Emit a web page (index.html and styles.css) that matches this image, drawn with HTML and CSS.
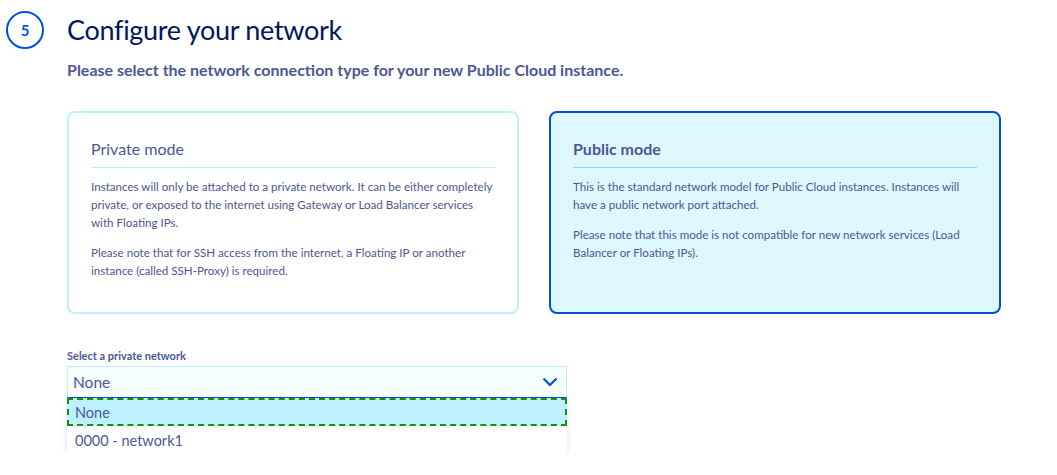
FILE: index.html
```html
<!DOCTYPE html>
<html>
<head>
<meta charset="utf-8">
<link rel="stylesheet" href="styles.css">
</head>
<body>
<div class="step">
  <div class="step-head">
    <div class="step-num">5</div>
    <h1 class="step-title">Configure your network</h1>
  </div>
  <div class="step-body">
    <p class="lead">Please select the network connection type for your new Public Cloud instance.</p>
    <div class="cards">
      <div class="card">
        <h2 class="card-title">Private mode</h2>
        <p class="card-text">Instances will only be attached to a private network. It can be either completely private, or exposed to the internet using Gateway or Load Balancer services with Floating IPs.</p>
        <p class="card-text">Please note that for SSH access from the internet, a Floating IP or another instance (called SSH-Proxy) is required.</p>
      </div>
      <div class="card card-active">
        <h2 class="card-title card-title-bold">Public mode</h2>
        <p class="card-text">This is the standard network model for Public Cloud instances. Instances will have a public network port attached.</p>
        <p class="card-text">Please note that this mode is not compatible for new network services (Load Balancer or Floating IPs).</p>
      </div>
    </div>
    <div class="field">
      <label class="field-label">Select a private network</label>
      <div class="select">
        <span class="select-value">None</span>
        <svg class="chevron" width="16" height="10" viewBox="0 0 16 10"><path d="M1.5 1.5 L8 8 L14.5 1.5" fill="none" stroke="#0050d7" stroke-width="2.2"/></svg>
      </div>
      <div class="menu">
        <div class="option option-focus">None</div>
        <div class="option">0000 - network1</div>
      </div>
    </div>
  </div>
</div>
</body>
</html>
```
FILE: styles.css
```css
* { box-sizing: border-box; }
html, body { margin: 0; padding: 0; background: #fff; }
body { font-family: "Source Sans Pro", Lato, "Noto Sans", sans-serif; color: #4d5693; }

.step { padding: 10px 0 0 6px; }
.step-head { display: flex; align-items: center; gap: 23px; }
.step-num {
  width: 38px; height: 38px; border: 2px solid #0050d7; border-radius: 50%;
  display: flex; align-items: center; justify-content: center;
  color: #0050d7; font-weight: 700; font-size: 15px;
}
.step-title { margin: 0; font-weight: 400; font-size: 27px; color: #00185e; line-height: 40px; letter-spacing: -0.3px; }

.step-body { padding-left: 61px; width: 1001px; }
.lead { margin: 10px 0 0; font-weight: 700; font-size: 16px; color: #4d5693; line-height: 20px; }

.cards { display: flex; gap: 30px; margin-top: 31px; }
.card {
  width: 452px; height: 203px; border: 2px solid #bef1ff; border-radius: 8px;
  padding: 25px 22px 0 22px; background: #fff;
}
.card-active { border-color: #0050d7; background: #def8ff; }
.card-title {
  margin: 0 0 10px; font-weight: 400; font-size: 16px; line-height: 22px; color: #4d5693;
  padding-bottom: 7px; border-bottom: 1px solid #bef1ff;
}
.card-active .card-title { border-bottom-color: #85d9fd; }
.card-title-bold { font-weight: 700; }
.card-text { margin: 0 0 12px; font-size: 11.6px; line-height: 18px; color: #4d5693; }

.field { margin-top: 34px; width: 500px; }
.field-label { display: block; font-weight: 700; font-size: 11px; line-height: 16px; color: #4d5693; }
.select {
  margin-top: 2px; height: 32px; background: #f5fdff; border: 1px solid #bef1ff;
  border-bottom: 1px solid #0050d7; display: flex; align-items: center; justify-content: space-between;
  padding: 0 8px 0 5px; font-size: 15.5px;
}
.chevron { display: block; }
.menu { box-shadow: 0 2px 6px rgba(0,14,156,0.12); background: #fff; }
.option { height: 28px; display: flex; align-items: center; padding-left: 8px; font-size: 14.5px; color: #4d5693; }
.option-focus { background: #bef1ff; outline: 2px dashed #1f8d00; outline-offset: -2px; }
```
